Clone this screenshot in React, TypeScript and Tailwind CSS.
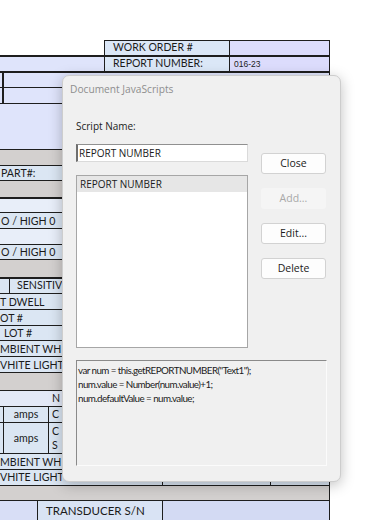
import React from "react";

const LB = "bg-[#dfe4fb]"; // field light blue
const RB = "bg-[#dbe6f3]"; // row blue
const VL = "bg-[#e8eef9]"; // very light
const GR = "bg-[#d3d0cf]"; // gray band
const LN = "border-[#1e1e1e]";

function TextRow({ h, bg, text, pl = "pl-[1px]", top = "border-t" }: { h: string; bg: string; text?: string; pl?: string; top?: string }) {
  return (
    <div className={`flex items-center overflow-hidden whitespace-nowrap ${h} ${bg} ${top} ${LN} ${pl} text-[10.6px] leading-[14px] text-[#1a1a1a]`}>
      {text}
    </div>
  );
}

function Btn({ label, disabled }: { label: string; disabled?: boolean }) {
  return (
    <div
      className={
        disabled
          ? "flex h-[21px] items-center justify-center rounded-[3px] bg-[#f5f5f5] text-[10.5px] text-[#a8a8a8]"
          : "flex h-[21px] items-center justify-center rounded-[3px] border border-[#d2d2d2] bg-[#fdfdfd] text-[10.5px] text-[#1b1b1b]"
      }
    >
      {label}
    </div>
  );
}

export default function App() {
  return (
    <div className="relative h-[520px] w-[377px] overflow-hidden bg-white font-['Lato',sans-serif]">
      {/* background PDF form */}
      <div className="flex w-[330px] flex-col">
        <div className="h-[40px]" />
        <div className={`flex flex-col border-r ${LN}`}>
          {/* WORK ORDER row */}
          <div className="flex h-[15px]">
            <div className="w-[104px]" />
            <div className={`flex w-[125px] items-center border-l border-t ${LN} bg-[#dbe7f7] pl-[8px] text-[10.5px] text-[#1a1a1a]`}>WORK ORDER #</div>
            <div className={`flex-1 border-l border-t ${LN} bg-[#dcdcfc]`} />
          </div>
          {/* REPORT NUMBER row */}
          <div className={`flex h-[16px] border-t-2 ${LN}`}>
            <div className={`w-[104px] ${LB}`} />
            <div className={`flex w-[125px] items-center border-l ${LN} bg-[#dbe7f7] pl-[8px] text-[10.5px] text-[#1a1a1a]`}>REPORT NUMBER:</div>
            <div className={`flex flex-1 items-center border-l ${LN} bg-[#dcdcfc] pl-[4px] font-['Liberation_Sans',sans-serif] text-[8.5px] text-[#222]`}>016-23</div>
          </div>
          <div className={`flex h-[16px] border-t-2 ${LN} ${LB} pl-[2px]`}>
            <div className={`flex-1 border-l-2 ${LN}`} />
          </div>
          <div className={`flex h-[16px] border-t ${LN} ${LB} pl-[2px]`}>
            <div className={`flex-1 border-l-2 ${LN}`} />
          </div>
          <div className={`h-[46px] border-t ${LN} ${LB}`} />
          <TextRow h="h-[16px]" bg={GR} />
          <TextRow h="h-[15px]" bg={RB} text="PART#:" />
          <TextRow h="h-[17px]" bg={GR} />
          <TextRow h="h-[15px]" bg={VL} top="border-t-2" />
          <TextRow h="h-[16px]" bg={RB} text="O / HIGH 0" />
          <TextRow h="h-[16px]" bg={VL} />
          <TextRow h="h-[15px]" bg={RB} text="O / HIGH 0" />
          <TextRow h="h-[18px]" bg={GR} />
          <div className={`flex h-[16px] border-t-2 ${LN} ${RB}`}>
            <div className="w-[9px]" />
            <div className={`flex flex-1 items-center border-l ${LN} pl-[7px] text-[10.6px] text-[#1a1a1a]`}>SENSITIV</div>
          </div>
          <TextRow h="h-[16px]" bg={RB} text="T DWELL" pl="pl-0" />
          <TextRow h="h-[16px]" bg={RB} text="OT #" pl="pl-0" />
          <TextRow h="h-[15px]" bg={RB} text="LOT #" pl="pl-[4px]" />
          <TextRow h="h-[16px]" bg={RB} text="MBIENT WH" pl="pl-0" />
          <TextRow h="h-[16px]" bg={RB} text="VHITE LIGHT" pl="pl-0" />
          <TextRow h="h-[18px]" bg={GR} />
          <div className={`flex h-[16px] items-center border-t ${LN} bg-[#e3e9f7] pl-[52px] text-[10.6px] text-[#1a1a1a]`}>N</div>
          <div className={`flex h-[16px] border-t ${LN} ${RB} text-[10.6px] text-[#1a1a1a]`}>
            <div className="w-[3px]" />
            <div className={`flex w-[45px] items-center justify-center border-l ${LN}`}>amps</div>
            <div className={`flex flex-1 items-center border-l ${LN} pl-[3px]`}>C</div>
          </div>
          <div className={`flex h-[31px] border-t ${LN} ${RB} text-[10.6px] leading-[14px] text-[#1a1a1a]`}>
            <div className="w-[3px]" />
            <div className={`flex w-[45px] items-center justify-center border-l ${LN}`}>amps</div>
            <div className={`flex flex-1 flex-col justify-center border-l ${LN} pl-[3px]`}>
              <span>C</span>
              <span>S</span>
            </div>
          </div>
          <TextRow h="h-[16px]" bg={RB} text="MBIENT WH" pl="pl-0" />
          <div className={`flex h-[16px] border-t ${LN} ${RB} text-[10.6px] text-[#1a1a1a]`}>
            <div className="flex w-[162px] items-center overflow-hidden whitespace-nowrap">VHITE LIGHT</div>
            <div className={`w-[108px] border-l ${LN}`} />
            <div className={`flex-1 border-l ${LN}`} />
          </div>
          <div className={`h-[15px] border-t ${LN} ${GR}`} />
          <div className={`flex h-[20px] border-t ${LN} text-[11.5px] text-[#1a1a1a]`}>
            <div className="w-[37px] bg-[#d8def6]" />
            <div className={`flex w-[125px] items-center border-l ${LN} bg-[#d9e3f4] pl-[8px]`}>TRANSDUCER S/N</div>
            <div className={`flex-1 border-l ${LN} bg-[#d3daf3]`} />
          </div>
        </div>
      </div>

      {/* Document JavaScripts dialog */}
      <div className="absolute left-[62px] top-[75px] flex h-[407px] w-[279px] flex-col rounded-[7px] border border-[#cdcdcd] bg-[#f0f0f0] shadow-[0_3px_14px_rgba(0,0,0,0.25)] font-['Open_Sans',sans-serif]">
        <div className="pl-[7px] pt-[6px] text-[10.2px] leading-[14px] text-[#8e8e8e]">Document JavaScripts</div>
        <div className="flex flex-col px-[13px]">
          <div className="mt-[23px] text-[10px] leading-[14px] text-[#1b1b1b]">Script Name:</div>
          <div className="mt-[11px] flex gap-[13px]">
            <div className="flex w-[172px] flex-col">
              <div className="flex h-[18px] items-center border-b border-l-2 border-r border-t border-b-[#dadada] border-l-[#6e6e6e] border-r-[#dadada] border-t-[#909090] bg-white pl-[1px] text-[10px] text-[#1b1b1b]">
                REPORT NUMBER
              </div>
              <div className="mt-[13px] flex h-[173px] flex-col border border-[#a6a6a6] bg-white">
                <div className="flex h-[16px] items-center bg-[#e6e6e6] pl-[3px] text-[10px] text-[#1b1b1b]">REPORT NUMBER</div>
              </div>
            </div>
            <div className="flex w-[65px] flex-col gap-[14px] pt-[9px]">
              <Btn label="Close" />
              <Btn label="Add..." disabled />
              <Btn label="Edit..." />
              <Btn label="Delete" />
            </div>
          </div>
          <div className="mt-[12px] flex h-[106px] flex-col border border-b-[#fbfbfb] border-l-[#8a8a8a] border-r-[#fbfbfb] border-t-[#8a8a8a] bg-[#f0f0f0] pl-[1px] pt-[2px] font-['Lato',sans-serif] text-[9.8px] leading-[14px] tracking-[-0.55px] text-[#1b1b1b]">
            <span>var num = this.getREPORTNUMBER("Text1");</span>
            <span>num.value = Number(num.value)+1;</span>
            <span>num.defaultValue = num.value;</span>
          </div>
        </div>
      </div>
    </div>
  );
}
